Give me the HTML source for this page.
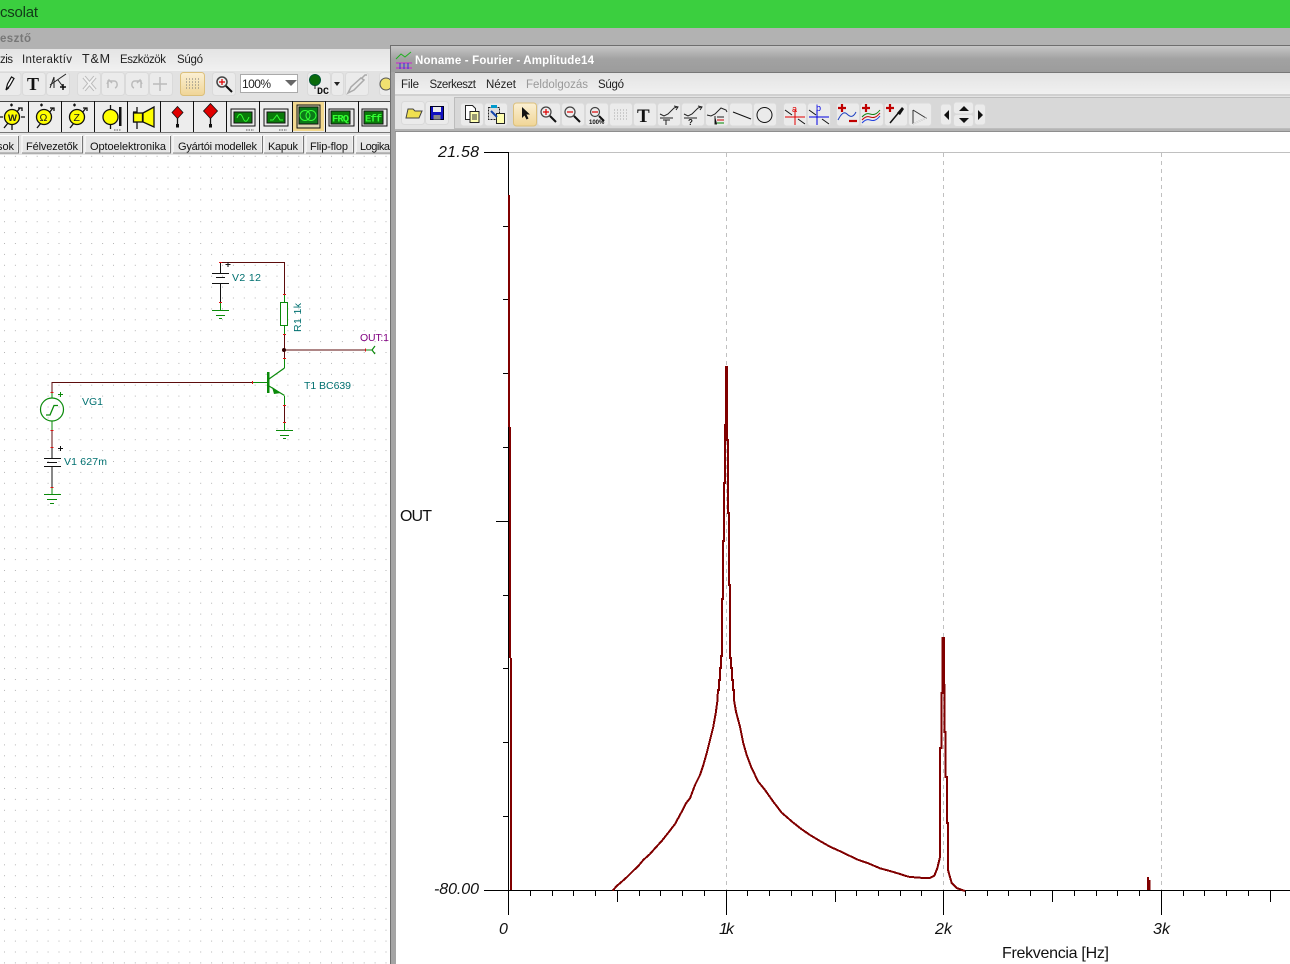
<!DOCTYPE html>
<html><head><meta charset="utf-8"><style>
html,body{margin:0;padding:0;background:#fff;width:1290px;height:964px;overflow:hidden}
svg{display:block;font-family:"Liberation Sans",sans-serif}
.b{fill:#ebebeb;stroke:#dadada;stroke-width:1}
.c{shape-rendering:crispEdges}
.lb{fill:#007070;font-size:10.5px}
.tab{fill:#e6e6e6}
.tt{font-size:11px;fill:#111}
.ax{font-size:16px;font-style:italic;fill:#111}
</style></head><body>
<svg width="1290" height="964" viewBox="0 0 1290 964">
<defs>
<linearGradient id="tg" x1="0" y1="0" x2="0" y2="1"><stop offset="0" stop-color="#c6c6c6"/><stop offset=".5" stop-color="#a2a2a2"/><stop offset="1" stop-color="#9c9c9c"/></linearGradient>
<linearGradient id="mg" x1="0" y1="0" x2="0" y2="1"><stop offset="0" stop-color="#e4e4e4"/><stop offset="1" stop-color="#f0f0f0"/></linearGradient>
<linearGradient id="ag" x1="0" y1="0" x2="0" y2="1"><stop offset="0" stop-color="#fbf0d4"/><stop offset="1" stop-color="#f0d596"/></linearGradient>
<pattern id="dots" x="4" y="3.2" width="10.9" height="10.9" patternUnits="userSpaceOnUse"><rect width="1" height="1" fill="#b4b4b4"/></pattern>
</defs>

<!-- top bar -->
<rect width="1290" height="28" fill="#3bcf3f"/>
<text x="0" y="17" font-size="15" fill="#123a18" textLength="38">csolat</text>
<rect y="28" width="1290" height="21" fill="#b2b2b2"/>
<text x="0" y="42" font-size="11.5" font-weight="700" fill="#777" textLength="31">esztő</text>

<!-- LEFT WINDOW -->
<rect y="49" width="390" height="21" fill="url(#mg)"/>
<g font-size="11.5" fill="#222">
<text x="0" y="63" textLength="13">zis</text>
<text x="22" y="63" textLength="50">Interaktív</text>
<text x="82" y="63" font-size="12.5" textLength="28">T&amp;M</text>
<text x="120" y="63" textLength="46">Eszközök</text>
<text x="177" y="63" textLength="26">Súgó</text>
</g>
<rect y="70" width="390" height="31" fill="#e2e2e2"/>
<rect y="70" width="390" height="1" fill="#f2f2f2"/>
<!-- left toolbar buttons -->
<rect class="b" x="-3" y="72.5" width="24" height="23" rx="3"/>
<rect class="b" x="22.5" y="72.5" width="23" height="23" rx="3"/>
<rect class="b" x="46.5" y="72.5" width="23" height="23" rx="3"/>
<rect class="b" x="77.5" y="72.5" width="23" height="23" rx="3"/>
<rect class="b" x="101.5" y="72.5" width="23" height="23" rx="3"/>
<rect class="b" x="125.5" y="72.5" width="23" height="23" rx="3"/>
<rect class="b" x="149.5" y="72.5" width="23" height="23" rx="3"/>
<rect x="180.5" y="72.5" width="24" height="23" rx="3" fill="url(#ag)" stroke="#dcc07c"/>
<rect class="b" x="212.5" y="72.5" width="23" height="23" rx="3"/>
<rect x="240.5" y="74.5" width="57" height="18" fill="#fff" stroke="#aaa"/>
<text x="242" y="88" font-size="12" fill="#222" textLength="29">100%</text>
<path d="M285 80h12l-6 6z" fill="#666"/>
<rect class="b" x="307.5" y="72.5" width="23" height="23" rx="3"/>
<rect class="b" x="331.5" y="72.5" width="12" height="23" rx="3"/>
<rect class="b" x="345.5" y="72.5" width="23" height="23" rx="3"/>
<rect class="b" x="379.5" y="72.5" width="14" height="23" rx="3"/>
<!-- left toolbar icons -->
<path d="M6 90l1.500-6 4-7 2.500 1.500-4 7zM6 90l3-2.500" fill="#fff" stroke="#111" stroke-width="1.200"/>
<text x="27" y="90" font-family="Liberation Serif" font-weight="700" font-size="18" fill="#111">T</text>
<path d="M50 85l16-11M54 77v11M50 88l4-11M58 80l6 8" fill="none" stroke="#222" stroke-width="1"/><path d="M60 87h6M63 84v6" stroke="#111" stroke-width="1.500"/>
<path d="M84 77l11 13M95 77l-11 13" stroke="#bbb" stroke-width="4"/><path d="M84 77l11 13M95 77l-11 13" stroke="#f2f2f2" stroke-width="2"/>
<path d="M108 88v-7l6 0c4 0 4 6 1 7M107 84l2-4 3 3" fill="none" stroke="#bbb" stroke-width="1.500"/>
<path d="M141 88v-7l-6 0c-4 0-4 6-1 7M142 84l-2-4-3 3" fill="none" stroke="#bbb" stroke-width="1.500"/>
<path d="M153 84h14M160 77v14" stroke="#bbb" stroke-width="1.500"/>
<path d="M186 79h13M186 82h13M186 85h13M186 88h13" stroke="#777" stroke-width="1" stroke-dasharray="1 2" class="c"/>
<circle cx="222" cy="82" r="5" fill="#eee" stroke="#444" stroke-width="1.500"/><path d="M219 82h6M222 79v6" stroke="#d00" stroke-width="1.200"/><path d="M226 86l6 6" stroke="#111" stroke-width="2"/>
<circle cx="315" cy="80" r="5.500" fill="#0a6a0a" stroke="#053"/><path d="M315 85v4" stroke="#222"/>
<text x="317" y="94" font-size="10" font-weight="700" fill="#111" font-family="Liberation Mono">DC</text>
<path d="M334 82h6l-3 4z" fill="#222"/>
<path d="M348 93l3-6 10-9 3 2-10 10zM362 78l3-3h2" fill="none" stroke="#aaa" stroke-width="1.500"/>
<circle cx="386" cy="84" r="6" fill="#f0e070" stroke="#555"/>

<!-- component row -->
<rect y="101" width="390" height="32" fill="#ededed"/>
<g class="c" fill="#111">
<rect x="0" y="101" width="390" height="1" fill="#444"/>
<rect x="0" y="132" width="390" height="1" fill="#777"/>
<rect x="28" y="101" width="1" height="31"/><rect x="61" y="101" width="1" height="31"/><rect x="94" y="101" width="1" height="31"/><rect x="127" y="101" width="1" height="31"/><rect x="160" y="101" width="1" height="31"/><rect x="193" y="101" width="1" height="31"/><rect x="226" y="101" width="1" height="31"/><rect x="259" y="101" width="1" height="31"/><rect x="292" y="101" width="1" height="31"/><rect x="325" y="101" width="1" height="31"/><rect x="358" y="101" width="1" height="31"/>
</g>
<!-- meters -->
<g stroke="#111" stroke-width="1.300" fill="none">
<path d="M0 117h3M21 117h4M12 124v6M4 128l16-20"/><circle cx="12" cy="117" r="7.500" fill="#ffff00"/><path d="M10 105h3M11.500 103.500v3M18 108h4v3"/>
<path d="M37 128l16-20"/><circle cx="44" cy="117" r="7.500" fill="#ffff00"/><path d="M40 105h3M41.500 103.500v3M50 108h4v3"/>
<path d="M70 128l16-20"/><circle cx="77" cy="117" r="7.500" fill="#ffff00"/><path d="M73 105h3M74.500 103.500v3M83 108h4v3"/>
<circle cx="110.500" cy="117" r="7.500" fill="#ffff00"/><path d="M110.500 105v4M110.500 125v4"/>
<path d="M137 107v22M133 112h4M133 122h4"/><rect x="133.500" y="113" width="9" height="9" fill="#ffff00"/><path d="M143 113l11-6v20l-11-5z" fill="#ffff00"/>
<path d="M177.500 113v13"/>
<path d="M210.500 112v14"/>
</g>
<path d="M177.500 106.500l5.500 6-5.500 6-5.500-6z" fill="#e00000" stroke="#111" stroke-width=".8"/>
<path d="M210.500 103.500l7 7.500-7 7.500-7-7.500z" fill="#e00000" stroke="#111" stroke-width=".8"/>
<rect x="119" y="107" width="2.500" height="19" fill="#111"/>
<text x="8" y="121" font-size="9.500" font-weight="700" fill="#222">W</text>
<text x="39.500" y="121" font-size="10.500" fill="#222">Ω</text>
<text x="73.500" y="121" font-size="10.500" fill="#222">Z</text>
<rect x="176" y="124" width="3" height="3.500" fill="#111"/><rect x="209" y="124" width="3" height="3.500" fill="#111"/>
<path d="M114 130h7" stroke="#555" stroke-dasharray="1.500 1"/>
<!-- scopes -->
<g class="c">
<rect x="231" y="109" width="24" height="17" fill="#e8e8e8" stroke="#111"/><rect x="234" y="112" width="18" height="11" fill="#0a7a0a" stroke="#111"/>
<rect x="264" y="109" width="24" height="17" fill="#e8e8e8" stroke="#111"/><rect x="267" y="112" width="18" height="11" fill="#0a7a0a" stroke="#111"/>
<rect x="293" y="102" width="31" height="29" fill="#f3d98f"/>
<rect x="297" y="105" width="23" height="23" fill="#dcd5b0" stroke="#111"/><rect x="299" y="107" width="19" height="17" fill="#0b7a18" stroke="#111"/>
<rect x="329" y="109" width="25" height="17" fill="#e8e8e8" stroke="#111"/><rect x="331" y="111" width="19" height="13" fill="#0a7a0a" stroke="#111"/>
<rect x="362" y="109" width="25" height="17" fill="#e8e8e8" stroke="#111"/><rect x="364" y="111" width="19" height="13" fill="#0a7a0a" stroke="#111"/>
</g>
<path d="M237 118c2-5 4-5 6 0s4 4 6-1" fill="none" stroke="#3f3" stroke-width="1"/>
<path d="M270 120h3l4-5 3 5h3" fill="none" stroke="#3f3" stroke-width="1"/>
<circle cx="305" cy="115.500" r="5" fill="none" stroke="#3f3"/><circle cx="311" cy="115.500" r="5" fill="none" stroke="#3f3"/>
<text x="332" y="121.500" font-size="10.500" font-weight="700" fill="#3f3" font-family="Liberation Mono" textLength="17">FRQ</text>
<text x="365" y="121.500" font-size="10.500" font-weight="700" fill="#3f3" font-family="Liberation Mono" textLength="17">Eff</text>
<path d="M246 130h8M279 130h8" stroke="#555" stroke-dasharray="1.500 1"/>

<!-- tabs -->
<rect y="133" width="390" height="22" fill="#e4e4e4"/>
<g class="c">
<rect x="-4" y="135.500" width="22" height="17" class="tab" stroke="#fff"/><path d="M18.500 136v17H0" stroke="#777" fill="none"/>
<rect x="22" y="135.500" width="60" height="17" class="tab" stroke="#fff"/><path d="M82.500 136v17H22" stroke="#777" fill="none"/>
<rect x="85" y="135.500" width="85" height="17" class="tab" stroke="#fff"/><path d="M170.500 136v17H85" stroke="#777" fill="none"/>
<rect x="173" y="135.500" width="89" height="17" class="tab" stroke="#fff"/><path d="M262.500 136v17H173" stroke="#777" fill="none"/>
<rect x="264" y="135.500" width="39" height="17" class="tab" stroke="#fff"/><path d="M303.500 136v17H264" stroke="#777" fill="none"/>
<rect x="306" y="135.500" width="47" height="17" class="tab" stroke="#fff"/><path d="M353.500 136v17H306" stroke="#777" fill="none"/>
<rect x="356" y="135.500" width="40" height="17" class="tab" stroke="#fff"/><path d="M356 153h34" stroke="#777" fill="none"/>
</g>
<text class="tt" x="-3" y="150" textLength="17">sok</text>
<text class="tt" x="26" y="150" textLength="52">Félvezetők</text>
<text class="tt" x="90" y="150" textLength="76">Optoelektronika</text>
<text class="tt" x="178" y="150" textLength="79">Gyártói modellek</text>
<text class="tt" x="268" y="150" textLength="30">Kapuk</text>
<text class="tt" x="310" y="150" textLength="38">Flip-flop</text>
<text class="tt" x="360" y="150" textLength="30">Logika</text>

<!-- canvas -->
<rect y="155" width="390" height="809" fill="#fff"/>
<rect y="155" width="390" height="809" fill="url(#dots)"/>

<!-- circuit -->
<g fill="none" stroke="#5c0c0c" stroke-width="1.200" class="c">
<path d="M220 262.500H284.500V294"/>
<path d="M284.500 334V358"/>
<path d="M284.500 350H366"/>
<path d="M52 392V382.500H252"/>
<path d="M52 430V448"/>
<path d="M284.500 405V422"/>
</g>
<g fill="none" stroke="#111" stroke-width="1.200" class="c">
<path d="M220.500 263V273M220.500 284V302"/>
<path d="M52 448V458M52 466V487"/>
</g>
<g fill="none" stroke="#0a8a0a" stroke-width="1.200">
<g class="c">
<path d="M212 273.500H229M216 277.500H225M212 283.500H229" stroke="#111"/>
<path d="M44 458.500H61M47 462.500H57M44 466.500H61" stroke="#111"/>
<path d="M220.500 302V310M212 310.500H229M216 315.500H225M219 318.500H222"/>
<path d="M284.500 422V430M276 430.500H293M280 435.500H289M283 438.500H286"/>
<path d="M52 487V495M44 494.500H61M47 499.500H57M50 503.500H54"/>
<path d="M284.500 294V302M284.500 326V334"/>
<rect x="280.500" y="302.500" width="7" height="23"/>
<path d="M252 382.500H267M284.500 358V368M284.500 396V405M52 392V398M52 421V430M366 350H372"/>
</g>
<path d="M375 346L372 350L375 354"/>
<path d="M269 379L284.500 368M269 386L284.500 395.500"/>
<circle cx="52" cy="409.500" r="11.500"/>
<path d="M46 415H50L54 405.500H58" stroke-width="1.300"/>
</g>
<rect x="267" y="372" width="2.500" height="21" fill="#0a8a0a"/>
<path d="M272 387l9 6-7 1z" fill="#0a8a0a"/>
<circle cx="284" cy="350" r="2" fill="#300"/>
<path d="M60.500 392v5M58 394.500h5" stroke="#0a8a0a" fill="none"/>
<path d="M228 262v5M225.500 264.500h5M60.500 446v5M58 448.500h5" stroke="#111" fill="none"/>
<g fill="none" stroke="#e01010" stroke-width="1" class="c">
<path d="M219 262.500h3M219 302.500h3M283 294.500h3M283 334.500h3M283 358.500h3M283 405.500h3M283 422.500h3M50.500 392.500h3M50.500 430.500h3M50.500 447.500h3M50.500 487.500h3"/>
<path d="M252.500 381v3M365.500 348.500v3"/>
</g>
<text class="lb" x="232" y="281" textLength="29">V2 12</text>
<text class="lb" x="0" y="0" transform="translate(301,332) rotate(-90)" textLength="29">R1 1k</text>
<text class="lb" x="304" y="389" textLength="47">T1 BC639</text>
<text class="lb" x="82" y="405" textLength="21">VG1</text>
<text class="lb" x="64" y="465" textLength="43">V1 627m</text>
<text x="360" y="341" font-size="10.500" fill="#800080" textLength="29">OUT:1</text>

<!-- RIGHT WINDOW -->
<rect x="390" y="45" width="900" height="919" fill="#a4a4a4"/>
<rect x="390" y="45" width="900" height="1" fill="#6e6e6e"/>
<rect x="390" y="45" width="1" height="919" fill="#6e6e6e"/>
<rect x="391" y="46" width="899" height="26" fill="url(#tg)"/>
<rect x="395" y="72" width="895" height="1" fill="#777"/>
<!-- title icon -->
<path d="M396 63h16M396 68h16" stroke="#d020d0" stroke-width="1"/>
<path d="M396 59l5-5 4 3 6-5" fill="none" stroke="#20b020"/>
<path d="M400 63v6M404 63v6M408 63v6" stroke="#3030e0"/>
<text x="415" y="64" font-size="11.500" font-weight="700" fill="#fff" textLength="179">Noname - Fourier - Amplitude14</text>
<!-- menu -->
<rect x="395" y="73" width="895" height="21" fill="url(#mg)"/>
<rect x="395" y="94" width="895" height="2" fill="#d0d0d0"/>
<g font-size="11.500" fill="#222">
<text x="401" y="88" textLength="18">File</text>
<text x="429.500" y="88" textLength="46.500">Szerkeszt</text>
<text x="486" y="88" textLength="30">Nézet</text>
<text x="526" y="88" textLength="62" fill="#999">Feldolgozás</text>
<text x="598" y="88" textLength="26">Súgó</text>
</g>
<!-- toolbar -->
<rect x="395" y="96" width="895" height="33" fill="#e4e4e4"/>
<rect x="454" y="98" width="836" height="31" fill="#d8d8d8"/>
<rect x="454.500" y="97.500" width="840" height="31" fill="none" stroke="#bdbdbd"/>
<rect x="395" y="129" width="895" height="3" fill="#b4b4b4"/>
<rect x="395" y="131" width="895" height="1" fill="#8e8e8e"/>
<!-- buttons -->
<g>
<rect class="b" x="401.500" y="101.500" width="23" height="23" rx="3"/>
<rect class="b" x="425.500" y="101.500" width="23" height="23" rx="3"/>
<rect class="b" x="460.500" y="103" width="23" height="23" rx="3"/>
<rect class="b" x="484.500" y="103" width="23" height="23" rx="3"/>
<rect x="513.500" y="103" width="23" height="23" rx="3" fill="url(#ag)" stroke="#dcc07c"/>
<rect class="b" x="537.500" y="103" width="23" height="23" rx="3"/>
<rect class="b" x="561.500" y="103" width="23" height="23" rx="3"/>
<rect class="b" x="585.500" y="103" width="23" height="23" rx="3"/>
<rect class="b" x="609.500" y="103" width="23" height="23" rx="3"/>
<rect class="b" x="633.500" y="103" width="23" height="23" rx="3"/>
<rect class="b" x="657.500" y="103" width="23" height="23" rx="3"/>
<rect class="b" x="681.500" y="103" width="23" height="23" rx="3"/>
<rect class="b" x="705.500" y="103" width="23" height="23" rx="3"/>
<rect class="b" x="729.500" y="103" width="23" height="23" rx="3"/>
<rect class="b" x="753.500" y="103" width="23" height="23" rx="3"/>
<rect class="b" x="783.500" y="103" width="23" height="23" rx="3"/>
<rect class="b" x="807.500" y="103" width="23" height="23" rx="3"/>
<rect class="b" x="836.500" y="103" width="23" height="23" rx="3"/>
<rect class="b" x="860.500" y="103" width="23" height="23" rx="3"/>
<rect class="b" x="884.500" y="103" width="23" height="23" rx="3"/>
<rect class="b" x="908.500" y="103" width="23" height="23" rx="3"/>
<rect class="b" x="940.500" y="104" width="11" height="21" rx="3"/>
<rect class="b" x="953.500" y="102" width="20" height="12" rx="3"/>
<rect class="b" x="953.500" y="114.500" width="20" height="12" rx="3"/>
<rect class="b" x="974.500" y="104" width="11" height="21" rx="3"/>
</g>
<!-- right icons -->
<path d="M406 118l2-9h5l2 2h7l-3 7z" fill="#f0e050" stroke="#444"/>
<rect x="430.500" y="106.500" width="13" height="13" fill="#1010c0" stroke="#002"/><rect x="433" y="107" width="8" height="5" fill="#eee"/><rect x="433.500" y="115" width="7" height="4.500" fill="#888"/>
<path d="M465.500 105.500h7l3 3v11h-10z" fill="#fff" stroke="#222"/><rect x="470" y="111.500" width="9" height="11" fill="#ffffb0" stroke="#222"/><path d="M472 115h5M472 117h5M472 119h5" stroke="#333"/>
<rect x="488.500" y="107.500" width="11" height="12" fill="#ddd" stroke="#222" stroke-dasharray="2 1"/><rect x="491" y="105" width="6" height="3" fill="#09c"/><rect x="496.500" y="113.500" width="8" height="10" fill="#ffffb0" stroke="#222"/><path d="M491 111l6 6" stroke="#14a" stroke-width="2"/>
<path d="M522 107v11l2.500-2.500 2 4 2-1-2-4h3.500z" fill="#111"/>
<g stroke-width="1.200">
<circle cx="546" cy="112" r="5" fill="#eee" stroke="#444"/><path d="M543 112h6M546 109v6" stroke="#d00"/><path d="M550 116l6 6" stroke="#111" stroke-width="2"/>
<circle cx="570" cy="112" r="5" fill="#eee" stroke="#444"/><path d="M567 112h6" stroke="#d00"/><path d="M574 116l6 6" stroke="#111" stroke-width="2"/>
<circle cx="595" cy="112" r="4.500" fill="#eee" stroke="#444"/><path d="M592 112h6" stroke="#d00"/><path d="M599 116l5 5" stroke="#111" stroke-width="2"/>
</g>
<text x="589" y="124" font-size="6" font-weight="700" fill="#111">100%</text>
<path d="M614 110h14M614 113h14M614 116h14M614 119h14" stroke="#aaa" stroke-dasharray="1 2" class="c"/>
<text x="637" y="122" font-family="Liberation Serif" font-weight="700" font-size="19" fill="#111">T</text>
<path d="M660 114l4 2 4-2 6-6 3-1M674 106l4 1-2 3" fill="none" stroke="#222"/><path d="M660 118h13M663 120h7M666 120v5" stroke="#222"/>
<path d="M684 114l4 2 4-2 6-6 3-1M698 106l4 1-2 3" fill="none" stroke="#222"/><path d="M684 118h13" stroke="#222"/><text x="688" y="125" font-size="8" font-weight="700" fill="#111">?</text>
<path d="M707 115l4 1 4-2 6-6 5 2 1 2" fill="none" stroke="#222"/><path d="M715 116v8h2M717 117h7" stroke="#222"/><path d="M717 120h7" stroke="#c00"/><path d="M717 123h7" stroke="#080"/>
<path d="M733 112l18 7" stroke="#111"/>
<circle cx="764.500" cy="115" r="7.500" fill="none" stroke="#111"/>
<path d="M785 110l7 5M798 119l7 5" stroke="#111"/><path d="M785 117h20" stroke="#e00000"/><path d="M795 110v15" stroke="#e00000"/>
<text x="792" y="112" font-size="9" fill="#e00000">a</text>
<path d="M809 110l7 5M822 119l7 5" stroke="#111"/><path d="M809 117h20" stroke="#0000e0"/><path d="M817 110v15" stroke="#0000e0"/>
<text x="816" y="111" font-size="9" fill="#0000e0">b</text>
<path d="M838 108h8M842 104v8" stroke="#c00000" stroke-width="2.200"/><path d="M838 120c3-6 6-9 9-6s6 4 9-2" fill="none" stroke="#2040c0"/><path d="M849 121h8" stroke="#c00000" stroke-width="2.200"/>
<path d="M862 108h8M866 104v8" stroke="#c00000" stroke-width="2.200"/>
<path d="M862 117c3-3 5-4 8-3s6 1 10-4" fill="none" stroke="#108010"/><path d="M862 120c3-3 5-4 8-3s6 1 10-4" fill="none" stroke="#c00000"/><path d="M862 123c3-3 5-4 8-3s6 1 10-4" fill="none" stroke="#2040e0"/>
<path d="M886 108h8M890 104v8" stroke="#c00000" stroke-width="2.200"/><path d="M890 123l10-12" stroke="#111" stroke-width="1.500"/><path d="M897 113l5-6 2 2-4 6z" fill="#111"/>
<path d="M913 110v14M913 110l13 8-13 6" fill="none" stroke="#333"/><path d="M913 124l13-6" stroke="#eee"/>
<path d="M949 110v10l-5-5zM964 106l5 5h-10zM959 118h10l-5 5zM978 110v10l5-5z" fill="#111"/>

<!-- plot area -->
<rect x="396" y="132" width="894" height="832" fill="#fff"/>
<g class="c" fill="none" stroke-width="1">
<path d="M508 152.500H1290" stroke="#c0c0c0"/>
<path d="M726.500 153V890M943.500 153V890M1161.500 153V890" stroke="#c0c0c0" stroke-dasharray="4 4"/>
<path d="M484 152.500H508.500V915M484 890.500H1290" stroke="#000"/>
<path d="M503 226.500h5M503 299.500h5M503 373.500h5M503 447.500h5M496 521.500h12M503 595.500h5M503 668.500h5M503 742.500h5M503 816.500h5" stroke="#000"/>
<path d="M530.500 890v6M552.500 890v6M573.500 890v6M595.500 890v6M639.500 890v6M660.500 890v6M682.500 890v6M704.500 890v6M747.500 890v6M769.500 890v6M791.500 890v6M812.500 890v6M856.500 890v6M878.500 890v6M900.500 890v6M921.500 890v6M965.500 890v6M987.500 890v6M1008.500 890v6M1030.500 890v6M1074.500 890v6M1096.500 890v6M1117.500 890v6M1139.500 890v6M1183.500 890v6M1204.500 890v6M1226.500 890v6M1248.500 890v6" stroke="#000"/>
<path d="M617.500 890v12M835.500 890v12M1052.500 890v12M1270.500 890v12" stroke="#000"/>
<path d="M726.500 890v25M943.500 890v25M1161.500 890v25" stroke="#000"/>
</g>
<!-- curve -->
<g fill="#800000" class="c">
<rect x="508" y="195" width="2" height="232"/>
<rect x="509" y="427" width="2" height="231"/>
<rect x="510" y="658" width="2" height="232"/>
<rect x="1147" y="877" width="2" height="13"/><rect x="1149" y="880" width="1.500" height="10"/>
</g>
<path d="M612.700 890.700L616.700 886L621.700 881.700L626.700 877.300L633.300 870.700L638.300 866L643.300 860L650 854L655 848.300L661.700 841L668.300 832.700L675 824L681.700 811.700L686 803.300L690 798.300L695 785L700 775L703.300 765L706.700 753.300L710 740L713.300 726.700L715.700 713.300L717.300 701.700L718 690H719V680H720V668H721V656H722V599H723V541H724V483H725V425H726V367H727V440H728V513H729V585H730V658H731V668H732V680H733V690H734V700L736 711.700L740 726.700L743.300 743.300L746.700 755L751.700 768.300L758.300 781.700L765 790L773.300 801.700L781.700 812.700L793.300 822.700L801.700 829.300L810 835L820 841L830 846.700L843.300 852.700L856.700 859.300L868.300 863.300L880 868.300L890 871L900 874L908.300 876.700L918.300 877.700L930 878L934.300 875.700L937.300 868.300L939.300 860L940 857V748H941.300V693H942.700V638H944V685H944.300V732H945.700V777H947V823H948V870L951.700 883L956.700 888L965 891" fill="none" stroke="#800000" stroke-width="2" stroke-linejoin="miter" shape-rendering="crispEdges"/>
<!-- labels -->
<text class="ax" x="438" y="157" textLength="41">21.58</text>
<text class="ax" x="434" y="894" textLength="45">-80.00</text>
<text x="400" y="521" font-size="16" fill="#111" textLength="32">OUT</text>
<text class="ax" x="499" y="934">0</text>
<text class="ax" x="719" y="934" textLength="15">1k</text>
<text class="ax" x="935" y="934" textLength="17">2k</text>
<text class="ax" x="1153" y="934" textLength="17">3k</text>
<text x="1002" y="958" font-size="16" fill="#111" textLength="107">Frekvencia [Hz]</text>
</svg>
</body></html>
